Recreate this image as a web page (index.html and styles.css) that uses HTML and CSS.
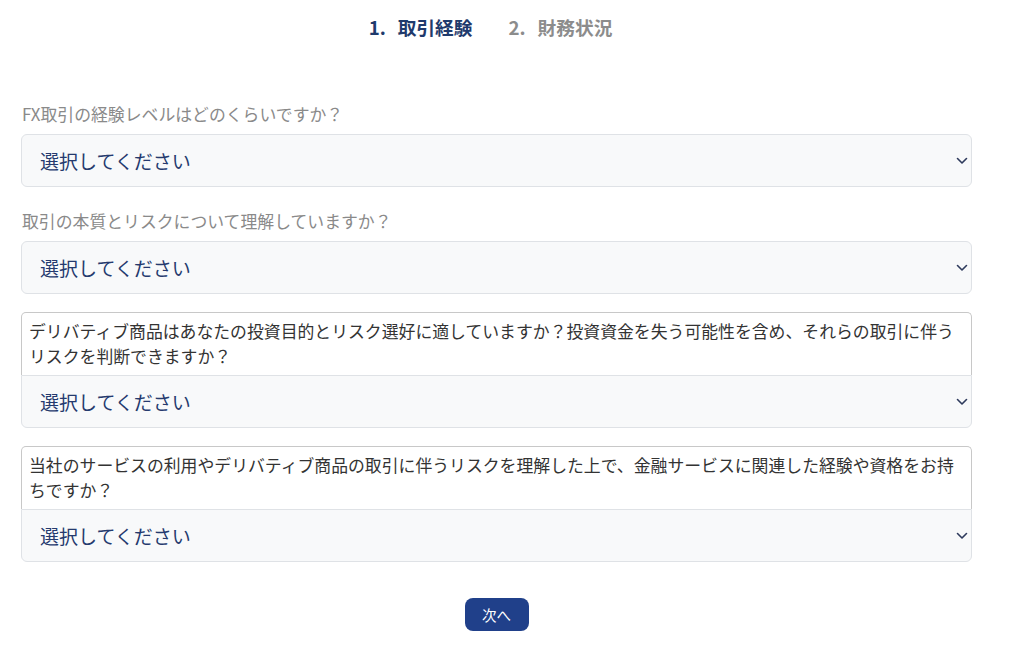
FILE: index.html
```html
<!DOCTYPE html>
<html lang="ja">
<head>
<meta charset="utf-8">
<title>取引経験</title>
<link rel="stylesheet" href="styles.css">
</head>
<body>
<div class="page">
  <div class="steps">
    <span class="step active"><span class="num">1.</span>取引経験</span>
    <span class="step"><span class="num">2.</span>財務状況</span>
  </div>
  <form class="form">
    <div class="field">
      <div class="label">FX取引の経験レベルはどのくらいですか？</div>
      <div class="select"><span>選択してください</span><svg class="chev" viewBox="0 0 12 8" width="12" height="8"><path d="M1.5 1.5 6 6l4.5-4.5"/></svg></div>
    </div>
    <div class="field">
      <div class="label">取引の本質とリスクについて理解していますか？</div>
      <div class="select"><span>選択してください</span><svg class="chev" viewBox="0 0 12 8" width="12" height="8"><path d="M1.5 1.5 6 6l4.5-4.5"/></svg></div>
    </div>
    <div class="field boxed">
      <div class="qbox">デリバティブ商品はあなたの投資目的とリスク選好に適していますか？投資資金を失う可能性を含め、それらの取引に伴うリスクを判断できますか？</div>
      <div class="select"><span>選択してください</span><svg class="chev" viewBox="0 0 12 8" width="12" height="8"><path d="M1.5 1.5 6 6l4.5-4.5"/></svg></div>
    </div>
    <div class="field boxed">
      <div class="qbox">当社のサービスの利用やデリバティブ商品の取引に伴うリスクを理解した上で、金融サービスに関連した経験や資格をお持ちですか？</div>
      <div class="select"><span>選択してください</span><svg class="chev" viewBox="0 0 12 8" width="12" height="8"><path d="M1.5 1.5 6 6l4.5-4.5"/></svg></div>
    </div>
    <div class="actions"><button type="button" class="btn">次へ</button></div>
  </form>
</div>
</body>
</html>
```
FILE: styles.css
```css
* { box-sizing: border-box; }
html, body { margin: 0; padding: 0; background: #ffffff; }
body {
  font-family: "Noto Sans CJK JP", "Noto Sans", sans-serif;
  color: #333333;
}
.page {
  width: 1024px;
  padding: 14px 0 0 21px;
}
.steps {
  width: 951px;
  display: flex;
  justify-content: center;
  gap: 36px;
  padding-right: 12px;
  height: 26px;
  line-height: 26px;
  font-size: 18.7px;
  font-weight: 700;
}
.step { color: #8c8c8c; display: flex; }
.step.active { color: #1f3a6c; }
.step .num { margin-right: 12px; }
.form { width: 951px; }
.field { margin-top: 23px; }
.field:first-child { margin-top: 63px; }
.field.boxed { margin-top: 18px; }
.label {
  font-size: 16.85px;
  line-height: 22px;
  color: #8a8a8a;
  padding-left: 1px;
  margin-bottom: 9px;
}
.select {
  height: 53px;
  border: 1px solid #dfe2e6;
  border-radius: 6px;
  background: #f8f9fa;
  display: flex;
  align-items: center;
  justify-content: space-between;
  padding: 0 3px 0 18px;
  font-size: 19px;
  color: #253a6e;
}
.chev {
  fill: none;
  stroke: #2e3a5c;
  stroke-width: 1.6;
  stroke-linecap: round;
  stroke-linejoin: round;
}
.qbox {
  border: 1px solid #c8c8c8;
  border-bottom: none;
  border-radius: 5px 5px 0 0;
  background: #ffffff;
  padding: 5px 10px 7px 7px;
  font-size: 16.85px;
  line-height: 25px;
  color: #333333;
  height: 63px;
}
.boxed .select { border-radius: 0 0 6px 6px; }
.actions {
  display: flex;
  justify-content: center;
  margin-top: 36px;
}
.btn {
  width: 64px;
  height: 33px;
  border: none;
  border-radius: 8px;
  background: #20408a;
  color: #ffffff;
  font-family: "Noto Sans CJK JP", sans-serif;
  font-size: 14.5px;
  padding: 0;
}
```
